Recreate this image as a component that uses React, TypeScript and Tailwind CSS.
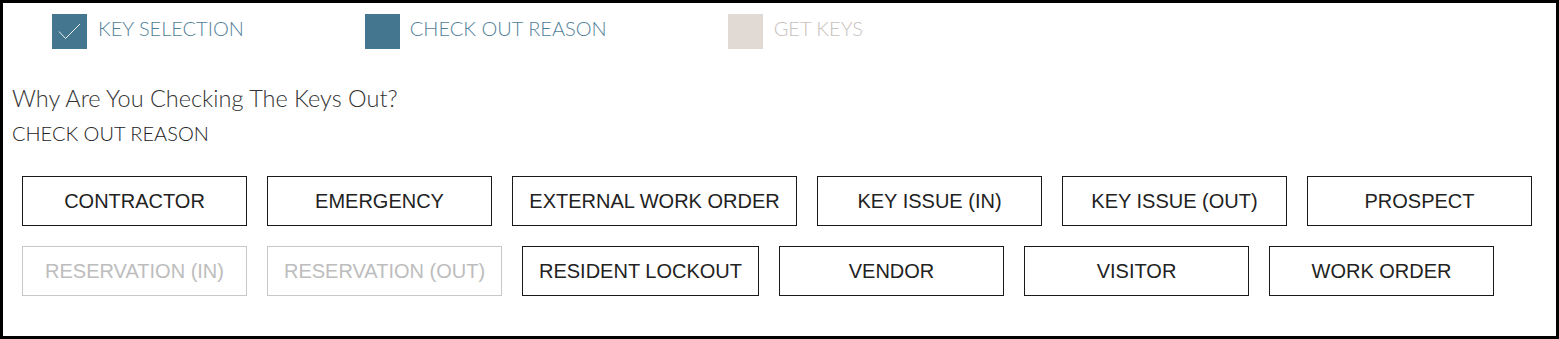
import React from "react";

const row1 = [
  { label: "CONTRACTOR", w: "w-[225px]" },
  { label: "EMERGENCY", w: "w-[225px]" },
  { label: "EXTERNAL WORK ORDER", w: "w-[285px]" },
  { label: "KEY ISSUE (IN)", w: "w-[225px]" },
  { label: "KEY ISSUE (OUT)", w: "w-[225px]" },
  { label: "PROSPECT", w: "w-[225px]" },
];

const row2 = [
  { label: "RESERVATION (IN)", w: "w-[225px]", disabled: true },
  { label: "RESERVATION (OUT)", w: "w-[235px]", disabled: true },
  { label: "RESIDENT LOCKOUT", w: "w-[237px]" },
  { label: "VENDOR", w: "w-[225px]" },
  { label: "VISITOR", w: "w-[225px]" },
  { label: "WORK ORDER", w: "w-[225px]" },
];

function ReasonButton({ label, w, disabled }: { label: string; w: string; disabled?: boolean }) {
  return (
    <button
      type="button"
      className={
        w +
        " h-[50px] shrink-0 border bg-white text-[20px] leading-none font-['Liberation_Sans',Arial,sans-serif] " +
        (disabled ? "border-[#c8c8c8] text-[#bdbdbd]" : "border-[#1a1a1a] text-[#222222]")
      }
    >
      {label}
    </button>
  );
}

export default function App() {
  return (
    <div className="w-[1559px] h-[339px] border-[3px] border-black bg-white font-['Lato',sans-serif] font-light overflow-hidden">
      <div className="flex items-start gap-[121px] pl-[49px] pt-[11px]">
        <div className="flex items-start gap-[11px]">
          <div className="w-[35px] h-[35px] bg-[#45768f] flex items-center justify-center">
            <svg width="35" height="35" viewBox="0 0 35 35" fill="none">
              <path d="M7 17.5 L13.5 24.5 L28 10" stroke="#e8f0f4" strokeWidth="1" />
            </svg>
          </div>
          <span className="pt-[4px] text-[20px] leading-none text-[#527f98]">KEY SELECTION</span>
        </div>
        <div className="flex items-start gap-[10px]">
          <div className="w-[35px] h-[35px] bg-[#45768f]" />
          <span className="pt-[4px] text-[20px] leading-none text-[#527f98]">CHECK OUT REASON</span>
        </div>
        <div className="flex items-start gap-[11px]">
          <div className="w-[35px] h-[35px] bg-[#e0d9d4]" />
          <span className="pt-[4px] text-[20px] leading-none text-[#c8c1bc]">GET KEYS</span>
        </div>
      </div>
      <div className="pl-[9px] pt-[37px] text-[23.5px] leading-[24px] text-[#333333]">
        Why Are You Checking The Keys Out?
      </div>
      <div className="pl-[9px] pt-[13px] text-[20px] leading-none text-[#222222]">
        CHECK OUT REASON
      </div>
      <div className="flex flex-col gap-[20px] pl-[19px] pt-[33px]">
        <div className="flex gap-[20px]">
          {row1.map((b) => (
            <ReasonButton key={b.label} {...b} />
          ))}
        </div>
        <div className="flex gap-[20px]">
          {row2.map((b) => (
            <ReasonButton key={b.label} {...b} />
          ))}
        </div>
      </div>
    </div>
  );
}
